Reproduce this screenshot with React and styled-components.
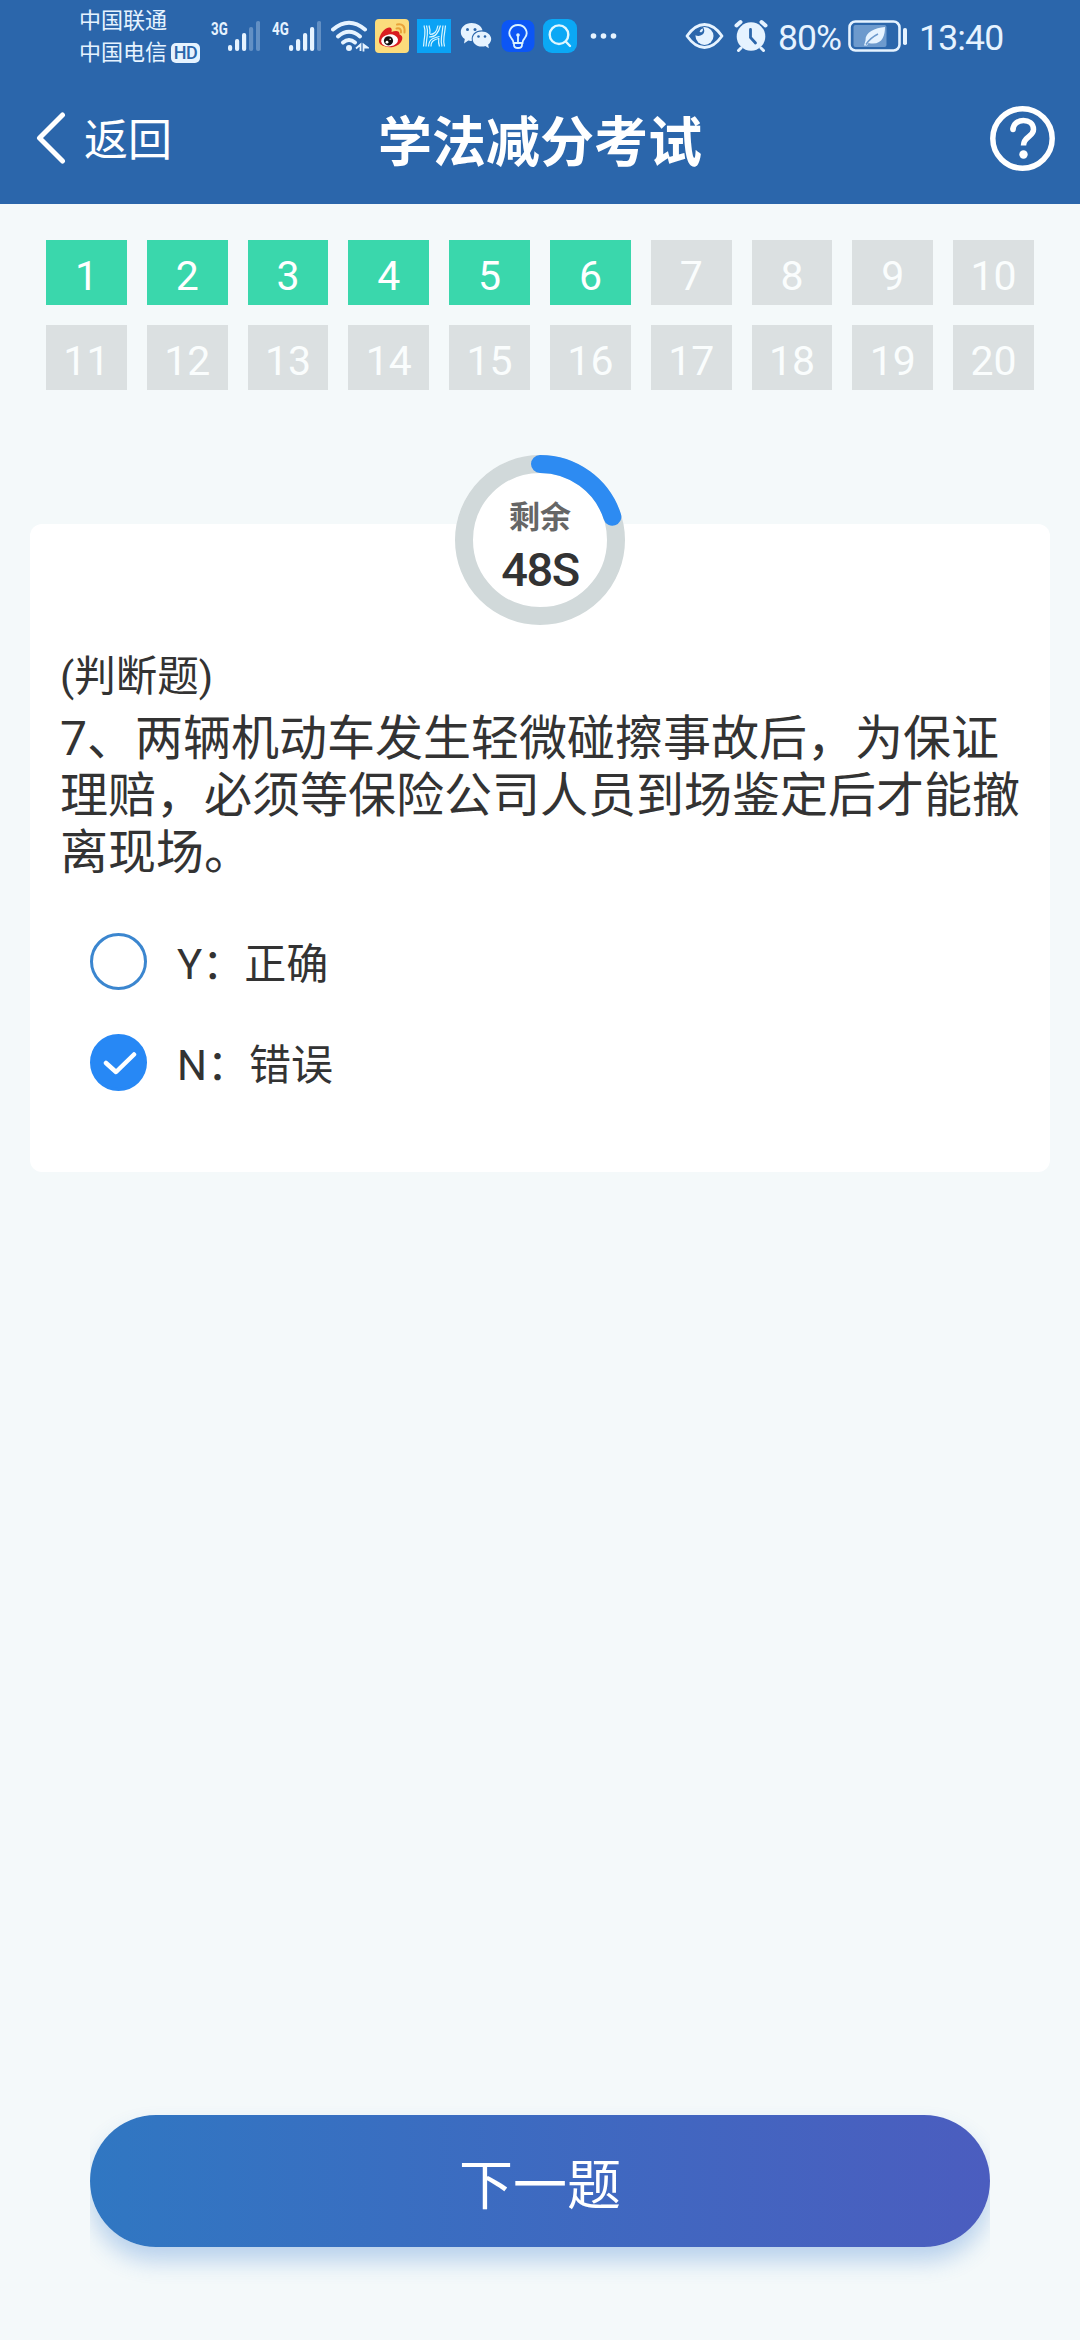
import React, {useState} from "react";
import styled, {createGlobalStyle} from "styled-components";

const GlobalStyle = createGlobalStyle`
  * {
    box-sizing: border-box;
  }
  body {
    margin: 0;
    background: #f4f9fa;
    font-family: Roboto, "Noto Sans CJK SC", sans-serif;
    color: #333;
  }
  button {
    border: 0;
    padding: 0;
    background: none;
    font-family: inherit;
    color: inherit;
  }
`;

const Page = styled.div`
  display: flex;
  flex-direction: column;
  width: 1080px;
  height: 2340px;
  overflow: hidden;
  background: #f4f9fa;
`;

const Top = styled.header`
  height: 204px;
  background: #2b66ab;
  color: #fff;
`;

/* status bar */

const StatusBar = styled.div`
  display: flex;
  align-items: center;
  height: 72px;
  padding-left: 79px;
  color: #e6f3ff;
  svg {
    display: block;
    flex: none;
  }
`;

const Carriers = styled.div`
  width: 132px;
  padding-top: 1px;
  font-size: 22px;
  line-height: 32px;
  white-space: nowrap;
  div {
    display: flex;
    align-items: center;
  }
`;

const HdBadge = styled.span`
  width: 29px;
  height: 20px;
  margin-left: 4px;
  border-radius: 5px;
  background: #e6f3ff;
  color: #2b66ab;
  font-size: 18px;
  font-weight: 500;
  line-height: 20px;
  letter-spacing: -0.5px;
  text-align: center;
`;

const Signal = styled.div`
  display: flex;
  width: ${({$width}) => $width}px;
  height: 32px;
`;

const Generation = styled.span`
  width: 17px;
  font-size: 19px;
  font-weight: 700;
  line-height: 17px;
  transform: scaleX(0.7);
  transform-origin: left;
`;

const AppIcons = styled.div`
  display: flex;
  align-items: center;
  gap: 8px;
  margin-left: 6px;
`;

const SystemIcons = styled.div`
  display: flex;
  align-items: center;
  margin-left: 66px;
  gap: 10px;
`;

const StatusText = styled.span`
  width: ${({$width}) => $width}px;
  font-size: 35.5px;
  line-height: 36px;
  letter-spacing: ${({$spacing}) => $spacing}px;
  white-space: nowrap;
  padding-top: 3px;
`;

/* title bar */

const TitleBar = styled.div`
  display: grid;
  grid-template-columns: 1fr auto 1fr;
  align-items: center;
  height: 132px;
  padding: 0 24px 0 36px;
  h1 {
    margin: 11px 0 0 -12px;
    font-size: 54px;
    font-weight: 700;
    line-height: 64px;
  }
`;

const BackButton = styled.button`
  display: flex;
  align-items: center;
  gap: 18px;
  font-size: 44px;
  line-height: 54px;
  span {
    margin-top: 5px;
  }
`;

const HelpButton = styled.button`
  justify-self: end;
  height: 67px;
`;

/* question numbers */

const NumberGrid = styled.nav`
  display: grid;
  grid-template-columns: repeat(10, 1fr);
  gap: 20px;
  padding: 36px 46px 0;
`;

const NumberCell = styled.div`
  height: 65px;
  padding-top: 4px;
  background: ${({$done}) => ($done ? "#3ad7ac" : "#dbe0e1")};
  color: ${({$done}) => ($done ? "#fff" : "#fafdfd")};
  font-size: 41px;
  line-height: 65px;
  text-align: center;
`;

/* question card */

const Card = styled.main`
  height: 648px;
  margin: 134px 30px 0;
  padding: 0 30px;
  border-radius: 12px;
  background: #fff;
`;

const Timer = styled.div`
  position: relative;
  width: 170px;
  height: 170px;
  margin: 0 auto;
  top: -69px;
  border-radius: 50%;
  background: #fff;
  svg {
    position: absolute;
    inset: 0;
  }
`;

const TimerText = styled.div`
  position: relative;
  display: flex;
  flex-direction: column;
  align-items: center;
  padding-top: 45px;
  span {
    color: #666;
    font-size: 31px;
    font-weight: 700;
    line-height: 36px;
  }
  strong {
    font-size: 47px;
    font-weight: 500;
    line-height: 50px;
    margin-top: 9px;
    letter-spacing: -1.4px;
  }
`;

const Question = styled.section`
  margin-top: -42px;
  h2 {
    margin: 0;
    font-size: 41.5px;
    font-weight: 400;
    line-height: 50px;
  }
  p {
    margin: 8px 0 0;
    font-size: 48px;
    line-height: 57px;
  }
`;

const Options = styled.div`
  display: flex;
  flex-direction: column;
  gap: 44px;
  margin: 52px 0 0 30px;
`;

const Option = styled.button`
  display: flex;
  align-items: center;
  height: 57px;
  gap: 30px;
  font-size: 42px;
  line-height: 57px;
  span {
    padding-top: 6px;
  }
`;

const Radio = styled.i`
  display: flex;
  align-items: center;
  justify-content: center;
  width: 57px;
  height: 57px;
  border-radius: 50%;
  border: 3px solid ${({$checked}) => ($checked ? "#2788f5" : "#3b86cf")};
  background: ${({$checked}) => ($checked ? "#2788f5" : "#fff")};
`;

/* bottom button */

const Footer = styled.footer`
  height: 265px;
  margin: auto 90px 0;
  padding-top: 40px;
  overflow: hidden;
`;

const NextButton = styled.button`
  display: block;
  width: 100%;
  height: 132px;
  padding-top: 11px;
  border-radius: 66px;
  background: linear-gradient(90deg, #3077c2, #4b5dbf);
  box-shadow: 0 14px 22px rgba(49, 119, 205, 0.3);
  color: #fff;
  font-size: 54px;
  line-height: 121px;
`;

const SignalBars = ({active}) => (
  <svg width="32" height="32" viewBox="0 0 32 32">
    {[6, 12, 18, 24, 30].map((h, i) => (
      <rect
        key={h}
        x={i * 7}
        y={31 - h}
        width="4.2"
        height={h}
        rx="2"
        fill="#e6f3ff"
        opacity={i < active ? 1 : 0.3}
      />
    ))}
  </svg>
);

const WifiIcon = () => (
  <svg width="38" height="34" viewBox="0 0 38 34" fill="none" stroke="#e6f3ff" strokeWidth="4">
    <path d="M2 10.5Q18 -3 34 10.5" strokeLinecap="round" />
    <path d="M7 17.5Q18 8 29 17.5" strokeLinecap="round" />
    <path d="M12 23.5Q18 18.5 24 23.5" strokeLinecap="round" />
    <circle cx="18" cy="29" r="3" fill="#e6f3ff" stroke="none" />
    <path d="M25 29.5L29.5 25.500V32M32.5 32.500V25.5L36.5 28.5H32.5" strokeWidth="1.8" />
  </svg>
);

const WeiboIcon = () => (
  <svg width="34" height="34" viewBox="0 0 34 34">
    <rect width="34" height="34" rx="4" fill="#fbdc7c" />
    <path
      d="M4 22C4 16 9 9 14 8.5C17 8.3 17 11 16.5 13C20 11.5 25 11 24.5 15.5C28 16.5 28 20 26 23C22 28.5 15 29 10.5 27.5C6.5 26.5 4 25 4 22Z"
      fill="#d91d20"
    />
    <ellipse cx="14.5" cy="21.5" rx="8.5" ry="6" fill="#fff" transform="rotate(-8 14 21)" />
    <circle cx="13.5" cy="21.8" r="4.6" fill="#111" />
    <circle cx="12" cy="23.2" r="1.4" fill="#fff" />
    <circle cx="15.2" cy="20.3" r="0.8" fill="#fff" />
    <path d="M22 5.5Q30.5 4 29.5 13.5M21.5 9.5Q26.5 8.5 26 13.5" fill="none" stroke="#e8a33a" strokeWidth="2" strokeLinecap="round" />
  </svg>
);

const HicarIcon = () => (
  <svg width="34" height="34" viewBox="0 0 34 34" fill="none" stroke="#d9f6ff" strokeWidth="1.2">
    <rect width="34" height="34" fill="#0aa2f5" stroke="none" />
    <path d="M7 6.500Q8.500 11 7.800 16T6.500 27.500M9.500 6.500Q11 11 10.300 16T9 27.500M12 6.500Q13.500 11 12.800 15" />
    <path d="M22.500 27.500Q21 24 21.800 19M25 27.500Q23.800 23 24.500 18T26 6.500M27.500 27.500Q26.300 23 27 18T28.500 6.500" />
    <path d="M12.800 15.500Q16 15.500 18 13.500T21 6.500M12 18Q17 18 19.500 15T23.500 6.500M11.500 27.500Q12 21 16 19.500T22.500 17.500M14 27.500Q14 22.500 17.500 21T22 19.500" />
  </svg>
);

const WechatIcon = () => (
  <svg width="34" height="34" viewBox="0 0 34 34" fill="#e6f3ff">
    <path d="M12.5 4C6.5 4 1.8 8 1.8 13C1.8 16 3.3 18.5 5.8 20L5 24.5L9.3 21.6Q11.5 22.1 13 21.8C11.5 16 16 11.3 23.5 11.3C22.5 7 18 4 12.5 4Z" />
    <path d="M22.7 12.5C17.5 12.5 13.7 16 13.7 20C13.7 24.5 18 28 23.5 27.5Q25 27.5 26.3 27L29.8 29.2L29.2 25.5C31 24.2 32.2 22.2 32.2 20C32.2 16 28 12.5 22.7 12.5Z" />
    <g fill="#2b66ab">
      <circle cx="8.5" cy="10.5" r="1.5" />
      <circle cx="16" cy="10.5" r="1.5" />
      <circle cx="19.5" cy="17.5" r="1.3" />
      <circle cx="26" cy="17.5" r="1.3" />
    </g>
  </svg>
);

const BulbIcon = () => (
  <svg width="34" height="34" viewBox="0 0 34 34" fill="none" stroke="#d9f2ff" strokeWidth="1.8">
    <rect x="0.5" y="1" width="33" height="32" rx="8" fill="#0c56f5" stroke="none" />
    <path d="M12.5 24Q12.5 21.5 10.5 19.5C5.5 13.5 10 6 17 6C24 6 28.5 13.5 23.5 19.5Q21.5 21.5 21.5 24Z" />
    <path d="M13 24.5V26Q13 29 17 29T21 26V24.5M17 17V24" />
    <circle cx="17" cy="16" r="1.8" fill="#d9f2ff" stroke="none" />
  </svg>
);

const SearchIcon = () => (
  <svg width="34" height="34" viewBox="0 0 34 34" fill="none" stroke="#dff7ff" strokeWidth="2.4">
    <rect width="34" height="34" rx="9" fill="#0ba8f5" stroke="none" />
    <circle cx="16" cy="15.7" r="9.3" />
    <path d="M22.7 22.5L27 27" strokeLinecap="round" />
  </svg>
);

const DotsIcon = () => (
  <svg width="34" height="34" viewBox="0 0 34 34" fill="#e6f3ff">
    <circle cx="8.5" cy="17" r="2.8" />
    <circle cx="18.5" cy="17" r="2.8" />
    <circle cx="28.5" cy="17" r="2.8" />
  </svg>
);

const EyeIcon = () => (
  <svg width="39" height="34" viewBox="0 0 39 34">
    <path d="M2 17Q10 5.5 19.5 5.5T37 17Q29 28.5 19.5 28.5T2 17Z" fill="none" stroke="#e6f3ff" strokeWidth="2.8" strokeLinejoin="round" />
    <circle cx="19.5" cy="17" r="9" fill="#e6f3ff" />
    <path d="M10 16Q14 18 17.5 15.5T18 8Q10 8.5 10 16Z" fill="#2b66ab" />
    <path d="M14.5 12.5Q16 9.5 18 9.5Q18.5 12 16 13.5Z" fill="#e6f3ff" />
  </svg>
);

const AlarmIcon = () => (
  <svg width="34" height="34" viewBox="0 0 34 34" fill="none" stroke="#e6f3ff" strokeLinecap="round">
    <circle cx="17" cy="17.5" r="14.3" fill="#e6f3ff" stroke="none" />
    <path d="M2.5 6.5L6.5 3M31.5 6.5L27.5 3" strokeWidth="4" />
    <path d="M7 29L4.5 31.5M27 29L29.5 31.5" strokeWidth="3" />
    <path d="M16.5 10.5V18.5L21.5 24" stroke="#2b66ab" strokeWidth="2.8" />
  </svg>
);

const BatteryIcon = () => (
  <svg width="61" height="34" viewBox="0 0 61 34">
    <rect x="1.5" y="2.5" width="50" height="29" rx="6" fill="none" stroke="#e6f3ff" strokeWidth="2.6" />
    <rect x="5.5" y="6" width="33" height="22" rx="2" fill="#6d9acd" />
    <rect x="55" y="9" width="4" height="17" rx="1.8" fill="#e6f3ff" />
    <path d="M37 8C27 9 17 13 17.5 21.5L16 26.5H19L20.5 24C34 27 37 17 37 8Z" fill="#e6f3ff" />
    <path d="M18 25.5Q22 19 30 15" fill="none" stroke="#6d9acd" strokeWidth="1.5" />
  </svg>
);

const CheckIcon = () => (
  <svg width="36" height="30" viewBox="0 0 36 30">
    <path d="M5 15L15 24L33 6.5" fill="none" stroke="#fff" strokeWidth="4.5" strokeLinecap="round" strokeLinejoin="round" />
  </svg>
);

const TOTAL_SECONDS = 60;
const RADIUS = 76;
const options = [
  {key: "Y", label: "正确"},
  {key: "N", label: "错误"},
];

function Countdown({left}) {
  const length = 2 * Math.PI * RADIUS;
  const passed = ((TOTAL_SECONDS - left) / TOTAL_SECONDS) * length;

  return (
    <Timer>
      <svg width="170" height="170" viewBox="0 0 170 170" fill="none" strokeWidth="18">
        <circle cx="85" cy="85" r={RADIUS} stroke="#d1d9da" />
        <circle
          cx="85"
          cy="85"
          r={RADIUS}
          stroke="#2d8bf2"
          strokeLinecap="round"
          strokeDasharray={`${passed} ${length}`}
          transform="rotate(-90 85 85)"
        />
      </svg>
      <TimerText>
        <span>剩余</span>
        <strong>{left}S</strong>
      </TimerText>
    </Timer>
  );
}

function App() {
  const [answer, setAnswer] = useState("N");

  return (
    <Page>
      <GlobalStyle />
      <Top>
        <StatusBar>
          <Carriers>
            <div>中国联通</div>
            <div>
              中国电信<HdBadge>HD</HdBadge>
            </div>
          </Carriers>
          <Signal $width={61}>
            <Generation>3G</Generation>
            <SignalBars active={3} />
          </Signal>
          <Signal $width={59}>
            <Generation>4G</Generation>
            <SignalBars active={4} />
          </Signal>
          <WifiIcon />
          <AppIcons>
            <WeiboIcon />
            <HicarIcon />
            <WechatIcon />
            <BulbIcon />
            <SearchIcon />
            <DotsIcon />
          </AppIcons>
          <SystemIcons>
            <EyeIcon />
            <AlarmIcon />
            <StatusText $width={60} $spacing={-1}>80%</StatusText>
            <BatteryIcon />
            <StatusText $width={90} $spacing={-0.8}>13:40</StatusText>
          </SystemIcons>
        </StatusBar>
        <TitleBar>
          <BackButton>
            <svg width="30" height="54" viewBox="0 0 30 54">
              <path d="M26.5 4L3.5 27L26.5 50" fill="none" stroke="#fff" strokeWidth="5" strokeLinecap="round" strokeLinejoin="round" />
            </svg>
            <span>返回</span>
          </BackButton>
          <h1>学法减分考试</h1>
          <HelpButton>
            <svg width="67" height="67" viewBox="0 0 67 67" fill="none" stroke="#fff" strokeWidth="5.5">
              <circle cx="33.5" cy="33.5" r="29.7" />
              <path d="M24 24.500C24.500 12.500 44.500 12.500 44.500 24.500C44.500 32 34.500 31 34.500 40.500" />
              <circle cx="24" cy="24.500" r="2.750" fill="#fff" stroke="none" />
              <circle cx="34.500" cy="49.5" r="4.2" fill="#fff" stroke="none" />
            </svg>
          </HelpButton>
        </TitleBar>
      </Top>

      <NumberGrid>
        {Array.from({length: 20}, (_, i) => (
          <NumberCell key={i} $done={i < 6}>
            {i + 1}
          </NumberCell>
        ))}
      </NumberGrid>

      <Card>
        <Countdown left={48} />
        <Question>
          <h2>(判断题)</h2>
          <p>
            7、两辆机动车发生轻微碰擦事故后，为保证理赔，必须等保险公司人员到场鉴定后才能撤离现场。
          </p>
        </Question>
        <Options>
          {options.map(({key, label}) => (
            <Option key={key} onClick={() => setAnswer(key)}>
              <Radio $checked={answer === key}>{answer === key && <CheckIcon />}</Radio>
              <span>
                {key}：{label}
              </span>
            </Option>
          ))}
        </Options>
      </Card>

      <Footer>
        <NextButton>下一题</NextButton>
      </Footer>
    </Page>
  );
}

export default App;
